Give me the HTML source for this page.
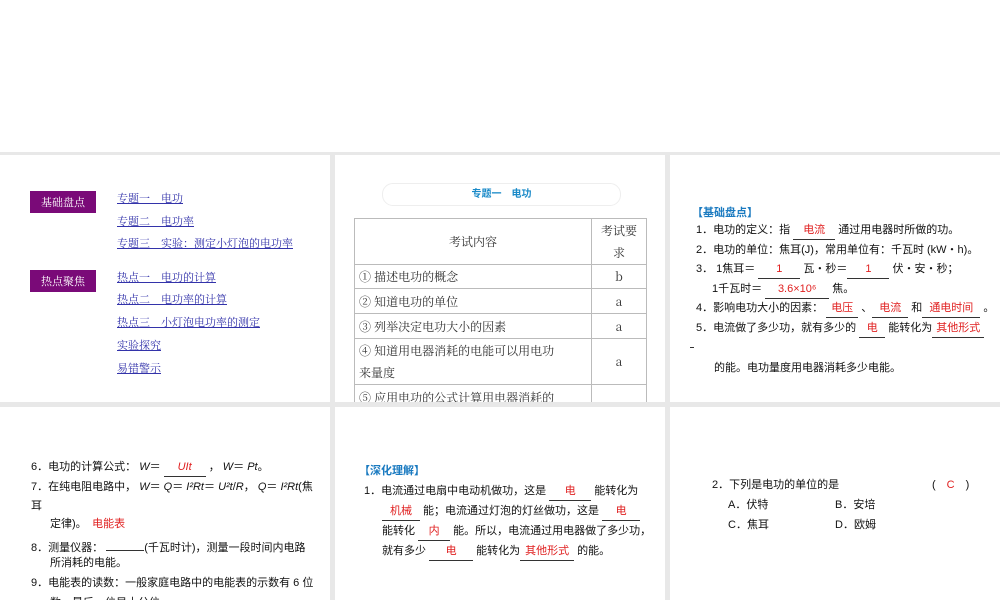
<!DOCTYPE html>
<html><head><meta charset="utf-8"><style>
body{margin:0;width:1000px;height:600px;background:#fff;position:relative;overflow:hidden;font-family:"Liberation Sans","Noto Sans CJK SC",sans-serif;}
.bg{position:absolute;left:0;top:152px;width:1000px;height:448px;background:#e8e8e8}
.p{position:absolute;background:#fff;overflow:hidden}
.a{position:absolute;white-space:nowrap}
.tag{position:absolute;left:30px;width:66px;height:22px;background:#7a0a78;color:#fff;font-size:11px;line-height:22px;text-align:center;font-family:"Noto Serif CJK SC",serif}
.lk{position:absolute;left:117px;color:#3333aa;text-decoration:underline;font-size:11px;font-family:"Noto Serif CJK SC",serif;white-space:nowrap}
table{position:absolute;left:19px;top:63px;border-collapse:collapse;font-family:"Noto Serif CJK SC",serif;font-size:12px;color:#333}
td{border:1px solid #bbb;padding:0 4px}
.r{color:#e02020}
.u{display:inline-block;border-bottom:1px solid #333;text-align:center;height:15px;line-height:13px}
.t{font-size:11px;color:#111}
</style></head><body>
<div class="bg"></div>
<div class="p" style="left:0;top:155px;width:330px;height:247px">
 <div class="tag" style="top:36px">基础盘点</div>
 <div class="tag" style="top:115px">热点聚焦</div>
 <div class="lk" style="top:35px">专题一　电功</div>
 <div class="lk" style="top:58px">专题二　电功率</div>
 <div class="lk" style="top:80px">专题三　实验：测定小灯泡的电功率</div>
 <div class="lk" style="top:114px">热点一　电功的计算</div>
 <div class="lk" style="top:136px">热点二　电功率的计算</div>
 <div class="lk" style="top:159px">热点三　小灯泡电功率的测定</div>
 <div class="lk" style="top:182px">实验探究</div>
 <div class="lk" style="top:205px">易错警示</div>
</div>
<div class="p" style="left:335px;top:155px;width:330px;height:247px">
 <div class="a" style="left:47px;top:28px;width:237px;height:21px;border:1px solid #eee;border-radius:11px;text-align:center;color:#1a8ac8;font-weight:bold;font-size:10px;line-height:21px">专题一　电功</div>
 <table>
  <tr style="height:46px"><td style="width:228px;text-align:center">考试内容</td><td style="width:46px;text-align:center;line-height:22px">考试要<br>求</td></tr>
  <tr style="height:24px"><td>① 描述电功的概念</td><td style="text-align:center">b</td></tr>
  <tr style="height:25px"><td>② 知道电功的单位</td><td style="text-align:center">a</td></tr>
  <tr style="height:25px"><td>③ 列举决定电功大小的因素</td><td style="text-align:center">a</td></tr>
  <tr style="height:46px"><td style="line-height:22px">④ 知道用电器消耗的电能可以用电功<br>来量度</td><td style="text-align:center">a</td></tr>
  <tr style="height:40px"><td style="vertical-align:top;padding-top:4px">⑤ 应用电功的公式计算用电器消耗的</td><td></td></tr>
 </table>
</div>
<div class="p t" style="left:670px;top:155px;width:330px;height:247px">
 <div class="a" style="left:22px;top:49px;color:#1a7ac0;font-weight:bold">【基础盘点】</div>
 <div class="a" style="left:26px;top:66px">1．电功的定义：指 <span class="u" style="width:42px"><span class="r">电流</span></span> 通过用电器时所做的功。</div>
 <div class="a" style="left:26px;top:86px">2．电功的单位：焦耳(J)，常用单位有：千瓦时 (kW・h)。</div>
 <div class="a" style="left:26px;top:105px">3． 1焦耳＝ <span class="u" style="width:42px"><span class="r">1</span></span> 瓦・秒＝<span class="u" style="width:42px"><span class="r">1</span></span> 伏・安・秒；</div>
 <div class="a" style="left:42px;top:125px">1千瓦时＝ <span class="u" style="width:64px"><span class="r">3.6×10⁶</span></span> 焦。</div>
 <div class="a" style="left:26px;top:144px">4．影响电功大小的因素： <span class="u" style="width:32px"><span class="r">电压</span></span> 、<span class="u" style="width:36px"><span class="r">电流</span></span> 和<span class="u" style="width:58px"><span class="r">通电时间</span></span> 。</div>
 <div class="a" style="left:26px;top:164px">5．电流做了多少功，就有多少的 <span class="u" style="width:26px"><span class="r">电</span></span> 能转化为<span class="u" style="width:52px"><span class="r">其他形式</span></span></div>
 <div class="a" style="left:20px;top:192px;width:4px;border-bottom:1px solid #333"></div>
 <div class="a" style="left:44px;top:204px">的能。电功量度用电器消耗多少电能。</div>
</div>
<div class="p t" style="left:0;top:407px;width:330px;height:193px">
 <div class="a" style="left:31px;top:51px">6．电功的计算公式： <i>W</i>＝ <span class="u" style="width:42px"><i class="r">UIt</i></span> ， <i>W</i>＝ <i>Pt</i>。</div>
 <div class="a" style="left:31px;top:71px">7．在纯电阻电路中， <i>W</i>＝ <i>Q</i>＝ <i>I²Rt</i>＝ <i>U²t</i>/<i>R</i>， <i>Q</i>＝ <i>I²Rt</i>(焦</div>
 <div class="a" style="left:31px;top:90px">耳</div>
 <div class="a" style="left:50px;top:108px">定律)。　<span class="r">电能表</span></div>
 <div class="a" style="left:31px;top:128px">8．测量仪器： <span class="u" style="width:38px"></span>(千瓦时计)，测量一段时间内电路</div>
 <div class="a" style="left:50px;top:147px">所消耗的电能。</div>
 <div class="a" style="left:31px;top:167px">9．电能表的读数：一般家庭电路中的电能表的示数有 6 位</div>
 <div class="a" style="left:50px;top:187px">数，最后一位是十分位</div>
</div>
<div class="p t" style="left:335px;top:407px;width:330px;height:193px">
 <div class="a" style="left:24px;top:55px;color:#1a7ac0;font-weight:bold">【深化理解】</div>
 <div class="a" style="left:29px;top:75px">1．电流通过电扇中电动机做功，这是 <span class="u" style="width:42px"><span class="r">电</span></span> 能转化为</div>
 <div class="a" style="left:47px;top:95px"><span class="u" style="width:38px"><span class="r">机械</span></span> 能；电流通过灯泡的灯丝做功，这是 <span class="u" style="width:38px"><span class="r">电</span></span></div>
 <div class="a" style="left:47px;top:115px">能转化 <span class="u" style="width:32px"><span class="r">内</span></span> 能。所以，电流通过用电器做了多少功，</div>
 <div class="a" style="left:47px;top:135px">就有多少 <span class="u" style="width:44px"><span class="r">电</span></span> 能转化为<span class="u" style="width:54px"><span class="r">其他形式</span></span> 的能。</div>
</div>
<div class="p t" style="left:670px;top:407px;width:330px;height:193px">
 <div class="a" style="left:42px;top:69px">2．下列是电功的单位的是</div>
 <div class="a" style="left:262px;top:69px">(　<span class="r">C</span>　)</div>
 <div class="a" style="left:58px;top:89px">A．伏特</div>
 <div class="a" style="left:165px;top:89px">B．安培</div>
 <div class="a" style="left:58px;top:109px">C．焦耳</div>
 <div class="a" style="left:165px;top:109px">D．欧姆</div>
</div>
</body></html>
